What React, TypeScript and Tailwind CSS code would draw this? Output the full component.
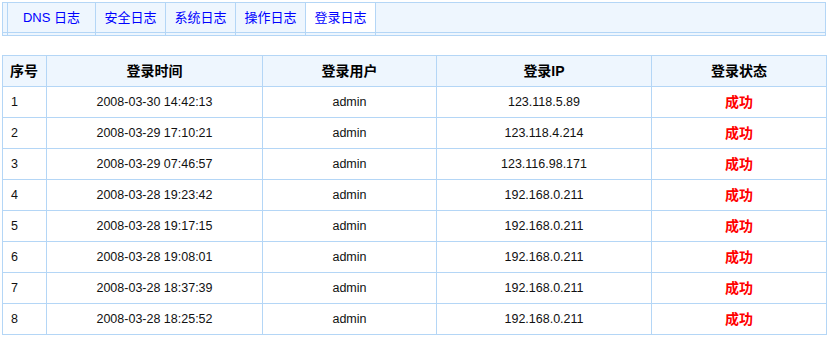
import React from "react";

type LoginRow = { id: number; time: string; user: string; ip: string };

const tabs = [
  { label: "DNS 日志", width: "w-[89px]", active: false },
  { label: "安全日志", width: "w-[70px]", active: false },
  { label: "系统日志", width: "w-[70px]", active: false },
  { label: "操作日志", width: "w-[70px]", active: false },
  { label: "登录日志", width: "w-[70px]", active: true },
];

const rows: LoginRow[] = [
  { id: 1, time: "2008-03-30 14:42:13", user: "admin", ip: "123.118.5.89" },
  { id: 2, time: "2008-03-29 17:10:21", user: "admin", ip: "123.118.4.214" },
  { id: 3, time: "2008-03-29 07:46:57", user: "admin", ip: "123.116.98.171" },
  { id: 4, time: "2008-03-28 19:23:42", user: "admin", ip: "192.168.0.211" },
  { id: 5, time: "2008-03-28 19:17:15", user: "admin", ip: "192.168.0.211" },
  { id: 6, time: "2008-03-28 19:08:01", user: "admin", ip: "192.168.0.211" },
  { id: 7, time: "2008-03-28 18:37:39", user: "admin", ip: "192.168.0.211" },
  { id: 8, time: "2008-03-28 18:25:52", user: "admin", ip: "192.168.0.211" },
];

const font = "font-['Liberation_Sans','Noto_Sans_CJK_SC',sans-serif]";

function TabBar() {
  return (
    <div className="ml-[2px] mt-[2px] w-[824px] h-[34px] border border-[#b4d6f6] bg-[#eef6fe] flex">
      {/* left spacer */}
      <div className="w-[4px] flex flex-col">
        <div className="h-[30px] border-b border-[#b4d6f6]" />
      </div>
      {tabs.map((tab, i) => (
        <div
          key={tab.label}
          className={`${tab.width} flex flex-col border-r border-[#b4d6f6] ${i === 0 ? "border-l" : ""}`}
        >
          <div
            className={`h-[30px] border-b border-[#b4d6f6] flex items-center justify-center text-[13px] text-[#0000ff] ${
              tab.active ? "bg-white" : ""
            }`}
          >
            {tab.label}
          </div>
        </div>
      ))}
      <div className="flex-1 flex flex-col">
        <div className="h-[30px] border-b border-[#b4d6f6]" />
      </div>
    </div>
  );
}

function LoginTable() {
  const cell = "border border-[#b4d6f6] h-[31px] p-0 text-[12.5px] align-middle";
  return (
    <table className="ml-[2px] mt-[19px] w-[824px] border-collapse table-fixed">
      <colgroup>
        <col className="w-[44px]" />
        <col className="w-[216px]" />
        <col className="w-[174px]" />
        <col className="w-[215px]" />
        <col className="w-[175px]" />
      </colgroup>
      <thead>
        <tr className="bg-[#eef6fe] text-black font-bold">
          <th className={`${cell} text-left pl-[7px] !text-[14px]`}>序号</th>
          <th className={`${cell} text-center !text-[14px]`}>登录时间</th>
          <th className={`${cell} text-center !text-[14px]`}>登录用户</th>
          <th className={`${cell} text-center !text-[14px]`}>登录IP</th>
          <th className={`${cell} text-center !text-[14px]`}>登录状态</th>
        </tr>
      </thead>
      <tbody>
        {rows.map((r) => (
          <tr key={r.id} className="text-[#111]">
            <td className={`${cell} text-left pl-[8px]`}>{r.id}</td>
            <td className={`${cell} text-center`}>{r.time}</td>
            <td className={`${cell} text-center`}>{r.user}</td>
            <td className={`${cell} text-center`}>{r.ip}</td>
            <td className={`${cell} text-center font-bold text-[#ff0000] !text-[14px]`}>成功</td>
          </tr>
        ))}
      </tbody>
    </table>
  );
}

export default function App() {
  return (
    <div className={`w-[828px] h-[338px] bg-white ${font}`}>
      <TabBar />
      <LoginTable />
    </div>
  );
}
